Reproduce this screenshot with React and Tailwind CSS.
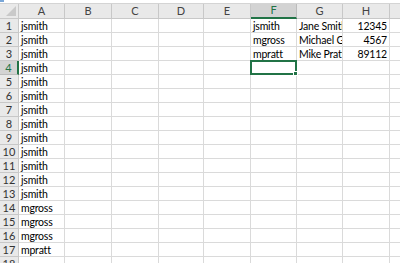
import React from 'react';

const cols = [
  { key: 'A', w: 'w-[46px]' },
  { key: 'B', w: 'w-[47px]' },
  { key: 'C', w: 'w-[47px]' },
  { key: 'D', w: 'w-[45px]' },
  { key: 'E', w: 'w-[47px]' },
  { key: 'F', w: 'w-[46px]' },
  { key: 'G', w: 'w-[46px]' },
  { key: 'H', w: 'w-[47px]' },
  { key: 'I', w: 'w-[60px]' },
];

const colA = [
  'jsmith', 'jsmith', 'jsmith', 'jsmith', 'jsmith', 'jsmith', 'jsmith', 'jsmith', 'jsmith',
  'jsmith', 'jsmith', 'jsmith', 'jsmith', 'mgross', 'mgross', 'mgross', 'mpratt', '',
];

const lookup = [
  { F: 'jsmith', G: 'Jane Smith', H: '12345' },
  { F: 'mgross', G: 'Michael Gross', H: '4567' },
  { F: 'mpratt', G: 'Mike Pratt', H: '89112' },
];

function Cell({ col, row }) {
  const selected = col.key === 'F' && row === 4;
  let text = '';
  if (col.key === 'A') text = colA[row - 1];
  const l = lookup[row - 1];
  if (l && l[col.key]) text = l[col.key];
  const right = col.key === 'H';

  return (
    <div className={`${col.w} shrink-0 h-[14px] border-r border-b border-[#dadada] relative`}>
      <div
        className={`h-full overflow-hidden whitespace-nowrap px-[2px] leading-[14px] ${right ? 'text-right' : ''}`}
      >
        {text}
      </div>
      {selected && (
        <div className="absolute -left-px -top-px w-[47px] h-[15px] border-2 border-[#217346] z-10">
          <div className="absolute -right-[3px] -bottom-[3px] w-[5px] h-[5px] bg-[#217346] border border-white" />
        </div>
      )}
    </div>
  );
}

export default function App() {
  const rows = Array.from({ length: 18 }, (_, i) => i + 1);

  return (
    <div
      className="w-[400px] h-[263px] overflow-hidden bg-white text-[10.5px] tracking-[-0.2px] text-black"
      style={{ fontFamily: 'Lato, "Liberation Sans", sans-serif' }}
    >
      <div className="h-[4px] bg-white border-b border-[#d4d4d4] relative">
        <div className="absolute left-0 top-0 w-[4px] h-[2px] bg-[#7aa7d8]" />
      </div>
      <div className="flex h-[15px] bg-[#e9e9e9] text-[#444] text-[11px] tracking-normal w-[460px]">
        <div className="w-[19px] shrink-0 border-r border-b border-[#c8c8c8] relative">
          <svg className="absolute right-[2px] bottom-[2px]" width="10" height="10" viewBox="0 0 10 10">
            <path d="M10 0 L10 10 L0 10 Z" fill="#c9c9c9" />
          </svg>
        </div>
        {cols.map((c) => (
          <div
            key={c.key}
            className={`${c.w} shrink-0 flex items-center justify-center border-r ${
              c.key === 'F'
                ? 'bg-[#d3d3d3] text-[#217346] border-b-2 border-b-[#217346] border-r-[#bcbcbc]'
                : 'border-b border-[#c8c8c8]'
            }`}
          >
            {c.key}
          </div>
        ))}
      </div>
      {rows.map((r) => (
        <div key={r} className="flex w-[460px]">
          <div
            className={`w-[19px] shrink-0 h-[14px] border-b text-center leading-[14px] text-[11px] tracking-normal ${
              r === 4
                ? 'bg-[#d3d3d3] text-[#217346] border-r-2 border-r-[#217346] border-b-[#bcbcbc]'
                : 'bg-[#e9e9e9] text-[#333] border-r border-[#c8c8c8]'
            }`}
          >
            {r}
          </div>
          {cols.map((c) => (
            <Cell key={c.key} col={c} row={r} />
          ))}
        </div>
      ))}
    </div>
  );
}
